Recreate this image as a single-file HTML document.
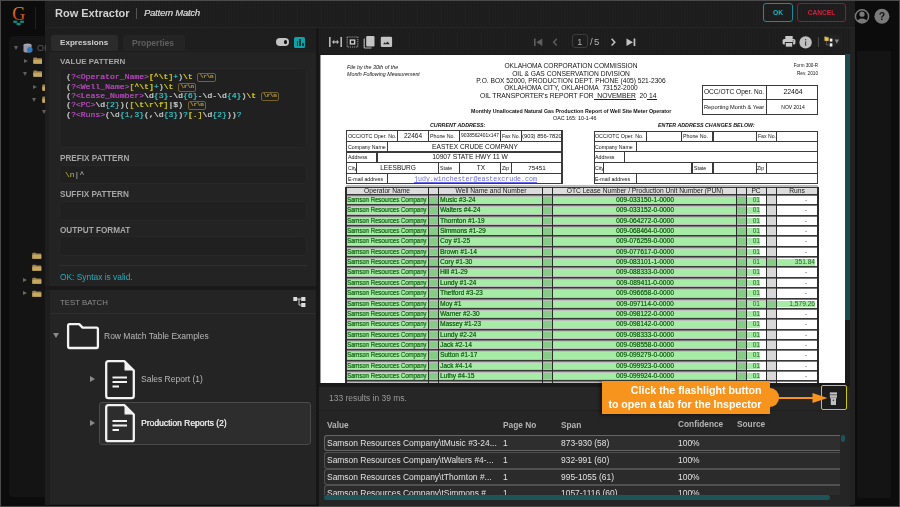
<!DOCTYPE html>
<html><head><meta charset="utf-8">
<style>
*{margin:0;padding:0;box-sizing:border-box}
html,body{width:900px;height:507px;overflow:hidden;background:#4a4a4a;font-family:"Liberation Sans",sans-serif}
.a{position:absolute}
#app{position:absolute;left:1px;top:1px;width:898px;height:505px;background:#0c0c0c;overflow:hidden}
.grid{background-color:#1d1d1d;background-image:repeating-linear-gradient(90deg,rgba(255,255,255,0.012) 0 1px,transparent 1px 3px),repeating-linear-gradient(0deg,rgba(0,0,0,0.05) 0 1px,transparent 1px 3px)}
.mono{font-family:"Liberation Mono",monospace}
.t{white-space:pre;position:absolute;will-change:transform}
.rn{display:inline-block;font-size:5.6px;line-height:6.5px;padding:0 1.4px;border:1px solid #6e5a22;border-radius:2px;color:#8a7430;vertical-align:1px;font-weight:bold;color:#9a8438;border-color:#76622a}
</style></head>
<body>
<div id="app">
</div>
<!-- absolute page coords layer -->
<div class="a" style="left:0;top:0;width:900px;height:507px">
  <!-- left sidebar inner panel -->
  <div class="a" style="left:9px;top:36px;width:36px;height:461px;background:#141414;border-radius:4px 0 0 4px"></div>
  <!-- header -->
  <div class="a grid" style="left:45px;top:1px;width:810px;height:26px"></div>
  <div class="a" style="left:45px;top:27px;width:810px;height:1px;background:#262626"></div>
  <!-- left col bg -->
  <div class="a" style="left:45px;top:28px;width:271px;height:477px;background:#1e1e1e"></div>
  <!-- expressions panel -->
  <div class="a" style="left:49px;top:50px;width:267px;height:236px;background:#232323"></div><div class="a" style="left:49px;top:50.5px;width:267px;height:1px;background:#1c1c1c"></div>
  <div class="a" style="left:45px;top:286px;width:271px;height:4px;background:#191919"></div>
  <!-- test batch panel -->
  <div class="a" style="left:50px;top:290px;width:266px;height:214px;background:#242424"></div>
  <!-- divider -->
  <div class="a" style="left:316px;top:28px;width:3px;height:477px;background:#161616"></div>
  <!-- doc toolbar -->
  <div class="a grid" style="left:319px;top:28px;width:532px;height:26px"></div>
  <!-- doc viewer area -->
  <div class="a" style="left:319px;top:54px;width:532px;height:333px;background:#1a1a1a"></div>
  <div class="a" style="left:320px;top:54.7px;width:525px;height:328px;background:#fff;overflow:hidden"><div class="a" style="left:-320px;top:-54.7px;width:900px;height:507px"><!--DOC-->
<div class="t" style="left:347.00px;top:60.80px;line-height:12px;font-size:5.32px;color:#111;font-style:italic">File by the 30th of the</div>
<div class="t" style="left:347.00px;top:67.90px;line-height:12px;font-size:5.34px;color:#111;font-style:italic">Month Following Measurement</div>
<div class="t" style="left:470.85px;width:200px;text-align:center;top:60.20px;line-height:12px;font-size:6.63px;color:#111;">OKLAHOMA CORPORATION COMMISSION</div>
<div class="t" style="left:470.85px;width:200px;text-align:center;top:67.60px;line-height:12px;font-size:6.67px;color:#111;">OIL &amp; GAS CONSERVATION DIVISION</div>
<div class="t" style="left:470.85px;width:200px;text-align:center;top:74.90px;line-height:12px;font-size:6.62px;color:#111;">P.O. BOX 52000, PRODUCTION DEPT. PHONE (405) 521-2306</div>
<div class="t" style="left:470.85px;width:200px;text-align:center;top:82.20px;line-height:12px;font-size:6.64px;color:#111;">OKLAHOMA CITY, OKLAHOMA&nbsp; 73152-2000</div>
<div class="t" style="left:480.30px;top:89.60px;line-height:12px;font-size:6.74px;color:#111;">OIL TRANSPORTER's REPORT FOR&nbsp; NOVEMBER&nbsp; 20 14</div>
<div class="a" style="left:593.50px;top:98.90px;width:42.80px;height:0.80px;background:#222;"></div>
<div class="a" style="left:647.30px;top:98.90px;width:9.70px;height:0.80px;background:#222;"></div>
<div class="t" style="left:471.20px;top:104.70px;line-height:12px;font-size:5.3px;color:#111;font-weight:bold">Monthly Unallocated Natural Gas Production Report of Well Site Meter Operator</div>
<div class="t" style="left:553.00px;top:112.00px;line-height:12px;font-size:5.37px;color:#111;">OAC 165: 10-1-46</div>
<div class="t" style="left:617.50px;width:200px;text-align:right;top:60.40px;line-height:12px;font-size:4.54px;color:#111;">Form 300-R</div>
<div class="t" style="left:617.50px;width:200px;text-align:right;top:67.80px;line-height:12px;font-size:4.7px;color:#111;">Rev. 2010</div>
<div class="a" style="left:702.00px;top:84.70px;width:116.30px;height:1.10px;background:#3a3a3a;"></div>
<div class="a" style="left:702.00px;top:113.50px;width:116.30px;height:1.10px;background:#3a3a3a;"></div>
<div class="a" style="left:702.00px;top:84.70px;width:1.10px;height:29.90px;background:#3a3a3a;"></div>
<div class="a" style="left:817.20px;top:84.70px;width:1.10px;height:29.90px;background:#3a3a3a;"></div>
<div class="a" style="left:702.00px;top:99.05px;width:116.30px;height:1.10px;background:#3a3a3a;"></div>
<div class="a" style="left:766.05px;top:84.70px;width:1.10px;height:29.90px;background:#3a3a3a;"></div>
<div class="t" style="left:703.80px;top:86.10px;line-height:12px;font-size:6.57px;color:#111;">OCC/OTC Oper. No.</div>
<div class="t" style="left:692.50px;width:200px;text-align:center;top:86.10px;line-height:12px;font-size:6.9px;color:#111;">22464</div>
<div class="t" style="left:703.80px;top:100.70px;line-height:12px;font-size:5.67px;color:#111;">Reporting Month &amp; Year</div>
<div class="t" style="left:692.50px;width:200px;text-align:center;top:100.70px;line-height:12px;font-size:5.0px;color:#111;">NOV 2014</div>
<div class="t" style="left:429.50px;top:118.70px;line-height:12px;font-size:5.35px;color:#111;font-weight:bold;font-style:italic">CURRENT ADDRESS:</div>
<div class="t" style="left:658.30px;top:118.80px;line-height:12px;font-size:5.35px;color:#111;font-weight:bold;font-style:italic">ENTER ADDRESS CHANGES BELOW:</div>
<div class="a" style="left:346.20px;top:130.20px;width:216.40px;height:1.20px;background:#3a3a3a;"></div>
<div class="a" style="left:346.20px;top:183.00px;width:216.40px;height:1.20px;background:#3a3a3a;"></div>
<div class="a" style="left:346.20px;top:130.20px;width:1.20px;height:54.00px;background:#3a3a3a;"></div>
<div class="a" style="left:561.40px;top:130.20px;width:1.20px;height:54.00px;background:#3a3a3a;"></div>
<div class="a" style="left:346.20px;top:140.70px;width:216.40px;height:1.20px;background:#3a3a3a;"></div>
<div class="a" style="left:346.20px;top:151.40px;width:216.40px;height:1.20px;background:#3a3a3a;"></div>
<div class="a" style="left:346.20px;top:162.00px;width:216.40px;height:1.20px;background:#3a3a3a;"></div>
<div class="a" style="left:346.20px;top:172.80px;width:216.40px;height:1.20px;background:#3a3a3a;"></div>
<div class="a" style="left:396.80px;top:130.20px;width:1.20px;height:11.10px;background:#3a3a3a;"></div>
<div class="a" style="left:427.90px;top:130.20px;width:1.20px;height:11.10px;background:#3a3a3a;"></div>
<div class="a" style="left:458.90px;top:130.20px;width:1.20px;height:11.10px;background:#3a3a3a;"></div>
<div class="a" style="left:500.10px;top:130.20px;width:1.20px;height:11.10px;background:#3a3a3a;"></div>
<div class="a" style="left:520.80px;top:130.20px;width:1.20px;height:11.10px;background:#3a3a3a;"></div>
<div class="a" style="left:386.70px;top:141.30px;width:1.20px;height:10.70px;background:#3a3a3a;"></div>
<div class="a" style="left:376.40px;top:152.00px;width:1.20px;height:10.60px;background:#3a3a3a;"></div>
<div class="a" style="left:356.00px;top:162.60px;width:1.20px;height:10.80px;background:#3a3a3a;"></div>
<div class="a" style="left:437.80px;top:162.60px;width:1.20px;height:10.80px;background:#3a3a3a;"></div>
<div class="a" style="left:458.90px;top:162.60px;width:1.20px;height:10.80px;background:#3a3a3a;"></div>
<div class="a" style="left:500.10px;top:162.60px;width:1.20px;height:10.80px;background:#3a3a3a;"></div>
<div class="a" style="left:510.70px;top:162.60px;width:1.20px;height:10.80px;background:#3a3a3a;"></div>
<div class="a" style="left:386.70px;top:173.40px;width:1.20px;height:10.80px;background:#3a3a3a;"></div>
<div class="t" style="left:347.60px;top:129.75px;line-height:12px;font-size:5.29px;color:#111;">OCC/OTC Oper. No.</div>
<div class="t" style="left:313.00px;width:200px;text-align:center;top:129.75px;line-height:12px;font-size:6.54px;color:#111;">22464</div>
<div class="t" style="left:429.80px;top:129.75px;line-height:12px;font-size:5.29px;color:#111;">Phone No.</div>
<div class="t" style="left:461.20px;top:129.75px;line-height:12px;font-size:4.92px;color:#111;">9038562401x147</div>
<div class="t" style="left:502.00px;top:129.75px;line-height:12px;font-size:5.11px;color:#111;">Fax No.</div>
<div class="t" style="left:522.20px;top:129.75px;line-height:12px;font-size:5.8px;color:#111;">(903) 856-7820</div>
<div class="t" style="left:347.60px;top:140.65px;line-height:12px;font-size:5.22px;color:#111;">Company Name</div>
<div class="t" style="left:375.40px;width:200px;text-align:center;top:140.65px;line-height:12px;font-size:6.58px;color:#111;">EASTEX CRUDE COMPANY</div>
<div class="t" style="left:347.60px;top:151.30px;line-height:12px;font-size:5.3px;color:#111;">Address</div>
<div class="t" style="left:370.40px;width:200px;text-align:center;top:151.30px;line-height:12px;font-size:6.72px;color:#111;">10907 STATE HWY 11 W</div>
<div class="t" style="left:347.60px;top:162.00px;line-height:12px;font-size:5.2px;color:#111;">City</div>
<div class="t" style="left:297.80px;width:200px;text-align:center;top:162.00px;line-height:12px;font-size:6.55px;color:#111;">LEESBURG</div>
<div class="t" style="left:440.20px;top:162.00px;line-height:12px;font-size:5.2px;color:#111;">State</div>
<div class="t" style="left:380.60px;width:200px;text-align:center;top:162.00px;line-height:12px;font-size:6.5px;color:#111;">TX</div>
<div class="t" style="left:501.60px;top:162.00px;line-height:12px;font-size:5.2px;color:#111;">Zip</div>
<div class="t" style="left:437.00px;width:200px;text-align:center;top:162.00px;line-height:12px;font-size:6.26px;color:#111;">75451</div>
<div class="t" style="left:347.60px;top:172.80px;line-height:12px;font-size:5.28px;color:#111;">E-mail address</div>
<div class="t mono" style="left:414px;top:172.80px;line-height:12px;font-size:6.61px;color:#6a6ae6;text-decoration:underline">judy.winchester@eastexcrude.com</div>
<div class="a" style="left:593.80px;top:130.60px;width:224.00px;height:1.20px;background:#3a3a3a;"></div>
<div class="a" style="left:593.80px;top:182.80px;width:224.00px;height:1.20px;background:#3a3a3a;"></div>
<div class="a" style="left:593.80px;top:130.60px;width:1.20px;height:53.40px;background:#3a3a3a;"></div>
<div class="a" style="left:816.60px;top:130.60px;width:1.20px;height:53.40px;background:#3a3a3a;"></div>
<div class="a" style="left:593.80px;top:140.60px;width:224.00px;height:1.20px;background:#3a3a3a;"></div>
<div class="a" style="left:593.80px;top:151.20px;width:224.00px;height:1.20px;background:#3a3a3a;"></div>
<div class="a" style="left:593.80px;top:162.20px;width:224.00px;height:1.20px;background:#3a3a3a;"></div>
<div class="a" style="left:593.80px;top:172.80px;width:224.00px;height:1.20px;background:#3a3a3a;"></div>
<div class="a" style="left:645.80px;top:130.60px;width:1.20px;height:10.60px;background:#3a3a3a;"></div>
<div class="a" style="left:681.20px;top:130.60px;width:1.20px;height:10.60px;background:#3a3a3a;"></div>
<div class="a" style="left:712.40px;top:130.60px;width:1.20px;height:10.60px;background:#3a3a3a;"></div>
<div class="a" style="left:756.00px;top:130.60px;width:1.20px;height:10.60px;background:#3a3a3a;"></div>
<div class="a" style="left:776.00px;top:130.60px;width:1.20px;height:10.60px;background:#3a3a3a;"></div>
<div class="a" style="left:636.10px;top:141.20px;width:1.20px;height:10.60px;background:#3a3a3a;"></div>
<div class="a" style="left:623.90px;top:151.80px;width:1.20px;height:11.00px;background:#3a3a3a;"></div>
<div class="a" style="left:602.90px;top:162.80px;width:1.20px;height:10.60px;background:#3a3a3a;"></div>
<div class="a" style="left:691.40px;top:162.80px;width:1.20px;height:10.60px;background:#3a3a3a;"></div>
<div class="a" style="left:712.40px;top:162.80px;width:1.20px;height:10.60px;background:#3a3a3a;"></div>
<div class="a" style="left:756.00px;top:162.80px;width:1.20px;height:10.60px;background:#3a3a3a;"></div>
<div class="a" style="left:765.60px;top:162.80px;width:1.20px;height:10.60px;background:#3a3a3a;"></div>
<div class="a" style="left:636.10px;top:173.40px;width:1.20px;height:10.60px;background:#3a3a3a;"></div>
<div class="t" style="left:595.00px;top:129.90px;line-height:12px;font-size:5.29px;color:#111;">OCC/OTC Oper. No.</div>
<div class="t" style="left:682.80px;top:129.90px;line-height:12px;font-size:5.29px;color:#111;">Phone No.</div>
<div class="t" style="left:757.50px;top:129.90px;line-height:12px;font-size:5.11px;color:#111;">Fax No.</div>
<div class="t" style="left:595.00px;top:140.50px;line-height:12px;font-size:5.22px;color:#111;">Company Name</div>
<div class="t" style="left:595.00px;top:151.30px;line-height:12px;font-size:5.3px;color:#111;">Address</div>
<div class="t" style="left:595.00px;top:162.10px;line-height:12px;font-size:5.2px;color:#111;">City</div>
<div class="t" style="left:693.50px;top:162.10px;line-height:12px;font-size:5.2px;color:#111;">State</div>
<div class="t" style="left:757.30px;top:162.10px;line-height:12px;font-size:5.2px;color:#111;">Zip</div>
<div class="t" style="left:595.00px;top:172.70px;line-height:12px;font-size:5.28px;color:#111;">E-mail address</div>
<div class="a" style="left:346.10px;top:184.80px;width:471.80px;height:198.20px;background:#bdbdbd;"></div>
<div class="a" style="left:346.10px;top:187.00px;width:471.80px;height:7.20px;background:#333;"></div>
<div class="a" style="left:347.30px;top:188.20px;width:469.40px;height:5.80px;background:#dcdcdc;"></div>
<div class="t" style="left:287.35px;width:200px;text-align:center;top:184.90px;line-height:12px;font-size:6.67px;color:#1a1a1a;">Operator Name</div>
<div class="t" style="left:390.50px;width:200px;text-align:center;top:184.90px;line-height:12px;font-size:6.67px;color:#1a1a1a;">Well Name and Number</div>
<div class="t" style="left:544.65px;width:200px;text-align:center;top:184.90px;line-height:12px;font-size:6.67px;color:#1a1a1a;">OTC Lease Number / Production Unit Number (PUN)</div>
<div class="t" style="left:656.30px;width:200px;text-align:center;top:184.90px;line-height:12px;font-size:6.67px;color:#1a1a1a;">PC</div>
<div class="t" style="left:697.20px;width:200px;text-align:center;top:184.90px;line-height:12px;font-size:6.67px;color:#1a1a1a;">Runs</div>
<div class="a" style="left:346.10px;top:194.00px;width:471.80px;height:1.00px;background:#383838;"></div>
<div class="a" style="left:346.10px;top:195.00px;width:471.80px;height:1.00px;background:#7a7a7a;"></div>
<div class="a" style="left:346.10px;top:197.00px;width:82.50px;height:7.00px;background:#a6eba6;"></div>
<div class="a" style="left:428.60px;top:197.00px;width:10.00px;height:7.00px;background:#86cc86;"></div>
<div class="a" style="left:438.60px;top:197.00px;width:103.80px;height:7.00px;background:#a6eba6;"></div>
<div class="a" style="left:542.40px;top:197.00px;width:10.20px;height:7.00px;background:#86cc86;"></div>
<div class="a" style="left:552.60px;top:197.00px;width:184.10px;height:7.00px;background:#a6eba6;"></div>
<div class="a" style="left:736.70px;top:197.00px;width:9.70px;height:7.00px;background:#86cc86;"></div>
<div class="a" style="left:746.40px;top:196.30px;width:19.80px;height:8.40px;background:#fff;"></div>
<div class="a" style="left:746.40px;top:197.00px;width:13.90px;height:7.00px;background:#a6eba6;"></div>
<div class="a" style="left:766.20px;top:196.30px;width:10.30px;height:8.40px;background:#d8d8d8;"></div>
<div class="a" style="left:776.50px;top:196.30px;width:41.40px;height:8.40px;background:#fff;"></div>
<div class="t" style="left:347.20px;top:194.10px;line-height:12px;font-size:6.5px;color:#1c6a1c;transform:scaleX(0.92);transform-origin:0 0;text-shadow:0.15px 0 0 #1c6a1c">Samson Resources Company</div>
<div class="t" style="left:440.40px;top:194.10px;line-height:12px;font-size:6.52px;color:#1c6a1c;text-shadow:0.15px 0 0 #1c6a1c">Music #3-24</div>
<div class="t" style="left:544.65px;width:200px;text-align:center;top:194.10px;line-height:12px;font-size:6.6px;color:#1c6a1c;text-shadow:0.15px 0 0 #1c6a1c">009-033150-1-0000</div>
<div class="t" style="left:560.30px;width:200px;text-align:right;top:194.10px;line-height:12px;font-size:6.6px;color:#1c6a1c;">01</div>
<div class="t" style="left:706.30px;width:200px;text-align:center;top:194.10px;line-height:12px;font-size:6.0px;color:#333;">-</div>
<div class="a" style="left:346.10px;top:204.00px;width:471.80px;height:1.00px;background:#383838;"></div>
<div class="a" style="left:346.10px;top:205.00px;width:471.80px;height:1.00px;background:#7a7a7a;"></div>
<div class="a" style="left:346.10px;top:207.00px;width:82.50px;height:7.00px;background:#a6eba6;"></div>
<div class="a" style="left:428.60px;top:207.00px;width:10.00px;height:7.00px;background:#86cc86;"></div>
<div class="a" style="left:438.60px;top:207.00px;width:103.80px;height:7.00px;background:#a6eba6;"></div>
<div class="a" style="left:542.40px;top:207.00px;width:10.20px;height:7.00px;background:#86cc86;"></div>
<div class="a" style="left:552.60px;top:207.00px;width:184.10px;height:7.00px;background:#a6eba6;"></div>
<div class="a" style="left:736.70px;top:207.00px;width:9.70px;height:7.00px;background:#86cc86;"></div>
<div class="a" style="left:746.40px;top:206.30px;width:19.80px;height:8.40px;background:#fff;"></div>
<div class="a" style="left:746.40px;top:207.00px;width:13.90px;height:7.00px;background:#a6eba6;"></div>
<div class="a" style="left:766.20px;top:206.30px;width:10.30px;height:8.40px;background:#d8d8d8;"></div>
<div class="a" style="left:776.50px;top:206.30px;width:41.40px;height:8.40px;background:#fff;"></div>
<div class="t" style="left:347.20px;top:204.44px;line-height:12px;font-size:6.5px;color:#1c6a1c;transform:scaleX(0.92);transform-origin:0 0;text-shadow:0.15px 0 0 #1c6a1c">Samson Resources Company</div>
<div class="t" style="left:440.40px;top:204.44px;line-height:12px;font-size:6.52px;color:#1c6a1c;text-shadow:0.15px 0 0 #1c6a1c">Walters #4-24</div>
<div class="t" style="left:544.65px;width:200px;text-align:center;top:204.44px;line-height:12px;font-size:6.6px;color:#1c6a1c;text-shadow:0.15px 0 0 #1c6a1c">009-033152-0-0000</div>
<div class="t" style="left:560.30px;width:200px;text-align:right;top:204.44px;line-height:12px;font-size:6.6px;color:#1c6a1c;">01</div>
<div class="t" style="left:706.30px;width:200px;text-align:center;top:204.44px;line-height:12px;font-size:6.0px;color:#333;">-</div>
<div class="a" style="left:346.10px;top:215.00px;width:471.80px;height:1.00px;background:#383838;"></div>
<div class="a" style="left:346.10px;top:216.00px;width:471.80px;height:1.00px;background:#7a7a7a;"></div>
<div class="a" style="left:346.10px;top:218.00px;width:82.50px;height:6.00px;background:#a6eba6;"></div>
<div class="a" style="left:428.60px;top:218.00px;width:10.00px;height:6.00px;background:#86cc86;"></div>
<div class="a" style="left:438.60px;top:218.00px;width:103.80px;height:6.00px;background:#a6eba6;"></div>
<div class="a" style="left:542.40px;top:218.00px;width:10.20px;height:6.00px;background:#86cc86;"></div>
<div class="a" style="left:552.60px;top:218.00px;width:184.10px;height:6.00px;background:#a6eba6;"></div>
<div class="a" style="left:736.70px;top:218.00px;width:9.70px;height:6.00px;background:#86cc86;"></div>
<div class="a" style="left:746.40px;top:217.30px;width:19.80px;height:7.40px;background:#fff;"></div>
<div class="a" style="left:746.40px;top:218.00px;width:13.90px;height:6.00px;background:#a6eba6;"></div>
<div class="a" style="left:766.20px;top:217.30px;width:10.30px;height:7.40px;background:#d8d8d8;"></div>
<div class="a" style="left:776.50px;top:217.30px;width:41.40px;height:7.40px;background:#fff;"></div>
<div class="t" style="left:347.20px;top:214.78px;line-height:12px;font-size:6.5px;color:#1c6a1c;transform:scaleX(0.92);transform-origin:0 0;text-shadow:0.15px 0 0 #1c6a1c">Samson Resources Company</div>
<div class="t" style="left:440.40px;top:214.78px;line-height:12px;font-size:6.52px;color:#1c6a1c;text-shadow:0.15px 0 0 #1c6a1c">Thornton #1-19</div>
<div class="t" style="left:544.65px;width:200px;text-align:center;top:214.78px;line-height:12px;font-size:6.6px;color:#1c6a1c;text-shadow:0.15px 0 0 #1c6a1c">009-064272-0-0000</div>
<div class="t" style="left:560.30px;width:200px;text-align:right;top:214.78px;line-height:12px;font-size:6.6px;color:#1c6a1c;">01</div>
<div class="t" style="left:706.30px;width:200px;text-align:center;top:214.78px;line-height:12px;font-size:6.0px;color:#333;">-</div>
<div class="a" style="left:346.10px;top:225.00px;width:471.80px;height:1.00px;background:#383838;"></div>
<div class="a" style="left:346.10px;top:226.00px;width:471.80px;height:1.00px;background:#7a7a7a;"></div>
<div class="a" style="left:346.10px;top:228.00px;width:82.50px;height:7.00px;background:#a6eba6;"></div>
<div class="a" style="left:428.60px;top:228.00px;width:10.00px;height:7.00px;background:#86cc86;"></div>
<div class="a" style="left:438.60px;top:228.00px;width:103.80px;height:7.00px;background:#a6eba6;"></div>
<div class="a" style="left:542.40px;top:228.00px;width:10.20px;height:7.00px;background:#86cc86;"></div>
<div class="a" style="left:552.60px;top:228.00px;width:184.10px;height:7.00px;background:#a6eba6;"></div>
<div class="a" style="left:736.70px;top:228.00px;width:9.70px;height:7.00px;background:#86cc86;"></div>
<div class="a" style="left:746.40px;top:227.30px;width:19.80px;height:8.40px;background:#fff;"></div>
<div class="a" style="left:746.40px;top:228.00px;width:13.90px;height:7.00px;background:#a6eba6;"></div>
<div class="a" style="left:766.20px;top:227.30px;width:10.30px;height:8.40px;background:#d8d8d8;"></div>
<div class="a" style="left:776.50px;top:227.30px;width:41.40px;height:8.40px;background:#fff;"></div>
<div class="t" style="left:347.20px;top:225.12px;line-height:12px;font-size:6.5px;color:#1c6a1c;transform:scaleX(0.92);transform-origin:0 0;text-shadow:0.15px 0 0 #1c6a1c">Samson Resources Company</div>
<div class="t" style="left:440.40px;top:225.12px;line-height:12px;font-size:6.52px;color:#1c6a1c;text-shadow:0.15px 0 0 #1c6a1c">Simmons #1-29</div>
<div class="t" style="left:544.65px;width:200px;text-align:center;top:225.12px;line-height:12px;font-size:6.6px;color:#1c6a1c;text-shadow:0.15px 0 0 #1c6a1c">009-068464-0-0000</div>
<div class="t" style="left:560.30px;width:200px;text-align:right;top:225.12px;line-height:12px;font-size:6.6px;color:#1c6a1c;">01</div>
<div class="t" style="left:706.30px;width:200px;text-align:center;top:225.12px;line-height:12px;font-size:6.0px;color:#333;">-</div>
<div class="a" style="left:346.10px;top:235.00px;width:471.80px;height:1.00px;background:#383838;"></div>
<div class="a" style="left:346.10px;top:236.00px;width:471.80px;height:1.00px;background:#7a7a7a;"></div>
<div class="a" style="left:346.10px;top:238.00px;width:82.50px;height:7.00px;background:#a6eba6;"></div>
<div class="a" style="left:428.60px;top:238.00px;width:10.00px;height:7.00px;background:#86cc86;"></div>
<div class="a" style="left:438.60px;top:238.00px;width:103.80px;height:7.00px;background:#a6eba6;"></div>
<div class="a" style="left:542.40px;top:238.00px;width:10.20px;height:7.00px;background:#86cc86;"></div>
<div class="a" style="left:552.60px;top:238.00px;width:184.10px;height:7.00px;background:#a6eba6;"></div>
<div class="a" style="left:736.70px;top:238.00px;width:9.70px;height:7.00px;background:#86cc86;"></div>
<div class="a" style="left:746.40px;top:237.30px;width:19.80px;height:8.40px;background:#fff;"></div>
<div class="a" style="left:746.40px;top:238.00px;width:13.90px;height:7.00px;background:#a6eba6;"></div>
<div class="a" style="left:766.20px;top:237.30px;width:10.30px;height:8.40px;background:#d8d8d8;"></div>
<div class="a" style="left:776.50px;top:237.30px;width:41.40px;height:8.40px;background:#fff;"></div>
<div class="t" style="left:347.20px;top:235.46px;line-height:12px;font-size:6.5px;color:#1c6a1c;transform:scaleX(0.92);transform-origin:0 0;text-shadow:0.15px 0 0 #1c6a1c">Samson Resources Company</div>
<div class="t" style="left:440.40px;top:235.46px;line-height:12px;font-size:6.52px;color:#1c6a1c;text-shadow:0.15px 0 0 #1c6a1c">Coy #1-25</div>
<div class="t" style="left:544.65px;width:200px;text-align:center;top:235.46px;line-height:12px;font-size:6.6px;color:#1c6a1c;text-shadow:0.15px 0 0 #1c6a1c">009-076259-0-0000</div>
<div class="t" style="left:560.30px;width:200px;text-align:right;top:235.46px;line-height:12px;font-size:6.6px;color:#1c6a1c;">01</div>
<div class="t" style="left:706.30px;width:200px;text-align:center;top:235.46px;line-height:12px;font-size:6.0px;color:#333;">-</div>
<div class="a" style="left:346.10px;top:246.00px;width:471.80px;height:1.00px;background:#383838;"></div>
<div class="a" style="left:346.10px;top:247.00px;width:471.80px;height:1.00px;background:#7a7a7a;"></div>
<div class="a" style="left:346.10px;top:249.00px;width:82.50px;height:6.00px;background:#a6eba6;"></div>
<div class="a" style="left:428.60px;top:249.00px;width:10.00px;height:6.00px;background:#86cc86;"></div>
<div class="a" style="left:438.60px;top:249.00px;width:103.80px;height:6.00px;background:#a6eba6;"></div>
<div class="a" style="left:542.40px;top:249.00px;width:10.20px;height:6.00px;background:#86cc86;"></div>
<div class="a" style="left:552.60px;top:249.00px;width:184.10px;height:6.00px;background:#a6eba6;"></div>
<div class="a" style="left:736.70px;top:249.00px;width:9.70px;height:6.00px;background:#86cc86;"></div>
<div class="a" style="left:746.40px;top:248.30px;width:19.80px;height:7.40px;background:#fff;"></div>
<div class="a" style="left:746.40px;top:249.00px;width:13.90px;height:6.00px;background:#a6eba6;"></div>
<div class="a" style="left:766.20px;top:248.30px;width:10.30px;height:7.40px;background:#d8d8d8;"></div>
<div class="a" style="left:776.50px;top:248.30px;width:41.40px;height:7.40px;background:#fff;"></div>
<div class="t" style="left:347.20px;top:245.80px;line-height:12px;font-size:6.5px;color:#1c6a1c;transform:scaleX(0.92);transform-origin:0 0;text-shadow:0.15px 0 0 #1c6a1c">Samson Resources Company</div>
<div class="t" style="left:440.40px;top:245.80px;line-height:12px;font-size:6.52px;color:#1c6a1c;text-shadow:0.15px 0 0 #1c6a1c">Brown #1-14</div>
<div class="t" style="left:544.65px;width:200px;text-align:center;top:245.80px;line-height:12px;font-size:6.6px;color:#1c6a1c;text-shadow:0.15px 0 0 #1c6a1c">009-077617-0-0000</div>
<div class="t" style="left:560.30px;width:200px;text-align:right;top:245.80px;line-height:12px;font-size:6.6px;color:#1c6a1c;">01</div>
<div class="t" style="left:706.30px;width:200px;text-align:center;top:245.80px;line-height:12px;font-size:6.0px;color:#333;">-</div>
<div class="a" style="left:346.10px;top:256.00px;width:471.80px;height:1.00px;background:#383838;"></div>
<div class="a" style="left:346.10px;top:257.00px;width:471.80px;height:1.00px;background:#7a7a7a;"></div>
<div class="a" style="left:346.10px;top:259.00px;width:82.50px;height:7.00px;background:#a6eba6;"></div>
<div class="a" style="left:428.60px;top:259.00px;width:10.00px;height:7.00px;background:#86cc86;"></div>
<div class="a" style="left:438.60px;top:259.00px;width:103.80px;height:7.00px;background:#a6eba6;"></div>
<div class="a" style="left:542.40px;top:259.00px;width:10.20px;height:7.00px;background:#86cc86;"></div>
<div class="a" style="left:552.60px;top:259.00px;width:184.10px;height:7.00px;background:#a6eba6;"></div>
<div class="a" style="left:736.70px;top:259.00px;width:9.70px;height:7.00px;background:#86cc86;"></div>
<div class="a" style="left:746.40px;top:259.00px;width:19.80px;height:7.00px;background:#a6eba6;"></div>
<div class="a" style="left:766.20px;top:259.00px;width:10.30px;height:7.00px;background:#86cc86;"></div>
<div class="a" style="left:776.50px;top:258.30px;width:41.40px;height:8.40px;background:#fff;"></div>
<div class="a" style="left:776.50px;top:259.00px;width:38.50px;height:7.00px;background:#a6eba6;"></div>
<div class="t" style="left:347.20px;top:256.14px;line-height:12px;font-size:6.5px;color:#1c6a1c;transform:scaleX(0.92);transform-origin:0 0;text-shadow:0.15px 0 0 #1c6a1c">Samson Resources Company</div>
<div class="t" style="left:440.40px;top:256.14px;line-height:12px;font-size:6.52px;color:#1c6a1c;text-shadow:0.15px 0 0 #1c6a1c">Cory #1-30</div>
<div class="t" style="left:544.65px;width:200px;text-align:center;top:256.14px;line-height:12px;font-size:6.6px;color:#1c6a1c;text-shadow:0.15px 0 0 #1c6a1c">009-083101-1-0000</div>
<div class="t" style="left:560.30px;width:200px;text-align:right;top:256.14px;line-height:12px;font-size:6.6px;color:#1c6a1c;">01</div>
<div class="t" style="left:614.80px;width:200px;text-align:right;top:256.14px;line-height:12px;font-size:6.6px;color:#1c6a1c;">351.84</div>
<div class="a" style="left:346.10px;top:266.00px;width:471.80px;height:1.00px;background:#383838;"></div>
<div class="a" style="left:346.10px;top:267.00px;width:471.80px;height:1.00px;background:#7a7a7a;"></div>
<div class="a" style="left:346.10px;top:269.00px;width:82.50px;height:7.00px;background:#a6eba6;"></div>
<div class="a" style="left:428.60px;top:269.00px;width:10.00px;height:7.00px;background:#86cc86;"></div>
<div class="a" style="left:438.60px;top:269.00px;width:103.80px;height:7.00px;background:#a6eba6;"></div>
<div class="a" style="left:542.40px;top:269.00px;width:10.20px;height:7.00px;background:#86cc86;"></div>
<div class="a" style="left:552.60px;top:269.00px;width:184.10px;height:7.00px;background:#a6eba6;"></div>
<div class="a" style="left:736.70px;top:269.00px;width:9.70px;height:7.00px;background:#86cc86;"></div>
<div class="a" style="left:746.40px;top:268.30px;width:19.80px;height:8.40px;background:#fff;"></div>
<div class="a" style="left:746.40px;top:269.00px;width:13.90px;height:7.00px;background:#a6eba6;"></div>
<div class="a" style="left:766.20px;top:268.30px;width:10.30px;height:8.40px;background:#d8d8d8;"></div>
<div class="a" style="left:776.50px;top:268.30px;width:41.40px;height:8.40px;background:#fff;"></div>
<div class="t" style="left:347.20px;top:266.48px;line-height:12px;font-size:6.5px;color:#1c6a1c;transform:scaleX(0.92);transform-origin:0 0;text-shadow:0.15px 0 0 #1c6a1c">Samson Resources Company</div>
<div class="t" style="left:440.40px;top:266.48px;line-height:12px;font-size:6.52px;color:#1c6a1c;text-shadow:0.15px 0 0 #1c6a1c">Hill #1-29</div>
<div class="t" style="left:544.65px;width:200px;text-align:center;top:266.48px;line-height:12px;font-size:6.6px;color:#1c6a1c;text-shadow:0.15px 0 0 #1c6a1c">009-088333-0-0000</div>
<div class="t" style="left:560.30px;width:200px;text-align:right;top:266.48px;line-height:12px;font-size:6.6px;color:#1c6a1c;">01</div>
<div class="t" style="left:706.30px;width:200px;text-align:center;top:266.48px;line-height:12px;font-size:6.0px;color:#333;">-</div>
<div class="a" style="left:346.10px;top:277.00px;width:471.80px;height:1.00px;background:#383838;"></div>
<div class="a" style="left:346.10px;top:278.00px;width:471.80px;height:1.00px;background:#7a7a7a;"></div>
<div class="a" style="left:346.10px;top:280.00px;width:82.50px;height:6.00px;background:#a6eba6;"></div>
<div class="a" style="left:428.60px;top:280.00px;width:10.00px;height:6.00px;background:#86cc86;"></div>
<div class="a" style="left:438.60px;top:280.00px;width:103.80px;height:6.00px;background:#a6eba6;"></div>
<div class="a" style="left:542.40px;top:280.00px;width:10.20px;height:6.00px;background:#86cc86;"></div>
<div class="a" style="left:552.60px;top:280.00px;width:184.10px;height:6.00px;background:#a6eba6;"></div>
<div class="a" style="left:736.70px;top:280.00px;width:9.70px;height:6.00px;background:#86cc86;"></div>
<div class="a" style="left:746.40px;top:279.30px;width:19.80px;height:7.40px;background:#fff;"></div>
<div class="a" style="left:746.40px;top:280.00px;width:13.90px;height:6.00px;background:#a6eba6;"></div>
<div class="a" style="left:766.20px;top:279.30px;width:10.30px;height:7.40px;background:#d8d8d8;"></div>
<div class="a" style="left:776.50px;top:279.30px;width:41.40px;height:7.40px;background:#fff;"></div>
<div class="t" style="left:347.20px;top:276.82px;line-height:12px;font-size:6.5px;color:#1c6a1c;transform:scaleX(0.92);transform-origin:0 0;text-shadow:0.15px 0 0 #1c6a1c">Samson Resources Company</div>
<div class="t" style="left:440.40px;top:276.82px;line-height:12px;font-size:6.52px;color:#1c6a1c;text-shadow:0.15px 0 0 #1c6a1c">Lundy #1-24</div>
<div class="t" style="left:544.65px;width:200px;text-align:center;top:276.82px;line-height:12px;font-size:6.6px;color:#1c6a1c;text-shadow:0.15px 0 0 #1c6a1c">009-089411-0-0000</div>
<div class="t" style="left:560.30px;width:200px;text-align:right;top:276.82px;line-height:12px;font-size:6.6px;color:#1c6a1c;">01</div>
<div class="t" style="left:706.30px;width:200px;text-align:center;top:276.82px;line-height:12px;font-size:6.0px;color:#333;">-</div>
<div class="a" style="left:346.10px;top:287.00px;width:471.80px;height:1.00px;background:#383838;"></div>
<div class="a" style="left:346.10px;top:288.00px;width:471.80px;height:1.00px;background:#7a7a7a;"></div>
<div class="a" style="left:346.10px;top:290.00px;width:82.50px;height:7.00px;background:#a6eba6;"></div>
<div class="a" style="left:428.60px;top:290.00px;width:10.00px;height:7.00px;background:#86cc86;"></div>
<div class="a" style="left:438.60px;top:290.00px;width:103.80px;height:7.00px;background:#a6eba6;"></div>
<div class="a" style="left:542.40px;top:290.00px;width:10.20px;height:7.00px;background:#86cc86;"></div>
<div class="a" style="left:552.60px;top:290.00px;width:184.10px;height:7.00px;background:#a6eba6;"></div>
<div class="a" style="left:736.70px;top:290.00px;width:9.70px;height:7.00px;background:#86cc86;"></div>
<div class="a" style="left:746.40px;top:289.30px;width:19.80px;height:8.40px;background:#fff;"></div>
<div class="a" style="left:746.40px;top:290.00px;width:13.90px;height:7.00px;background:#a6eba6;"></div>
<div class="a" style="left:766.20px;top:289.30px;width:10.30px;height:8.40px;background:#d8d8d8;"></div>
<div class="a" style="left:776.50px;top:289.30px;width:41.40px;height:8.40px;background:#fff;"></div>
<div class="t" style="left:347.20px;top:287.16px;line-height:12px;font-size:6.5px;color:#1c6a1c;transform:scaleX(0.92);transform-origin:0 0;text-shadow:0.15px 0 0 #1c6a1c">Samson Resources Company</div>
<div class="t" style="left:440.40px;top:287.16px;line-height:12px;font-size:6.52px;color:#1c6a1c;text-shadow:0.15px 0 0 #1c6a1c">Thetford #3-23</div>
<div class="t" style="left:544.65px;width:200px;text-align:center;top:287.16px;line-height:12px;font-size:6.6px;color:#1c6a1c;text-shadow:0.15px 0 0 #1c6a1c">009-096658-0-0000</div>
<div class="t" style="left:560.30px;width:200px;text-align:right;top:287.16px;line-height:12px;font-size:6.6px;color:#1c6a1c;">01</div>
<div class="t" style="left:706.30px;width:200px;text-align:center;top:287.16px;line-height:12px;font-size:6.0px;color:#333;">-</div>
<div class="a" style="left:346.10px;top:298.00px;width:471.80px;height:1.00px;background:#383838;"></div>
<div class="a" style="left:346.10px;top:299.00px;width:471.80px;height:1.00px;background:#7a7a7a;"></div>
<div class="a" style="left:346.10px;top:301.00px;width:82.50px;height:6.00px;background:#a6eba6;"></div>
<div class="a" style="left:428.60px;top:301.00px;width:10.00px;height:6.00px;background:#86cc86;"></div>
<div class="a" style="left:438.60px;top:301.00px;width:103.80px;height:6.00px;background:#a6eba6;"></div>
<div class="a" style="left:542.40px;top:301.00px;width:10.20px;height:6.00px;background:#86cc86;"></div>
<div class="a" style="left:552.60px;top:301.00px;width:184.10px;height:6.00px;background:#a6eba6;"></div>
<div class="a" style="left:736.70px;top:301.00px;width:9.70px;height:6.00px;background:#86cc86;"></div>
<div class="a" style="left:746.40px;top:301.00px;width:19.80px;height:6.00px;background:#a6eba6;"></div>
<div class="a" style="left:766.20px;top:301.00px;width:10.30px;height:6.00px;background:#86cc86;"></div>
<div class="a" style="left:776.50px;top:300.30px;width:41.40px;height:7.40px;background:#fff;"></div>
<div class="a" style="left:776.50px;top:301.00px;width:38.50px;height:6.00px;background:#a6eba6;"></div>
<div class="t" style="left:347.20px;top:297.50px;line-height:12px;font-size:6.5px;color:#1c6a1c;transform:scaleX(0.92);transform-origin:0 0;text-shadow:0.15px 0 0 #1c6a1c">Samson Resources Company</div>
<div class="t" style="left:440.40px;top:297.50px;line-height:12px;font-size:6.52px;color:#1c6a1c;text-shadow:0.15px 0 0 #1c6a1c">Moy #1</div>
<div class="t" style="left:544.65px;width:200px;text-align:center;top:297.50px;line-height:12px;font-size:6.6px;color:#1c6a1c;text-shadow:0.15px 0 0 #1c6a1c">009-097114-0-0000</div>
<div class="t" style="left:560.30px;width:200px;text-align:right;top:297.50px;line-height:12px;font-size:6.6px;color:#1c6a1c;">01</div>
<div class="t" style="left:614.80px;width:200px;text-align:right;top:297.50px;line-height:12px;font-size:6.6px;color:#1c6a1c;">1,579.26</div>
<div class="a" style="left:346.10px;top:308.00px;width:471.80px;height:1.00px;background:#383838;"></div>
<div class="a" style="left:346.10px;top:309.00px;width:471.80px;height:1.00px;background:#7a7a7a;"></div>
<div class="a" style="left:346.10px;top:311.00px;width:82.50px;height:6.00px;background:#a6eba6;"></div>
<div class="a" style="left:428.60px;top:311.00px;width:10.00px;height:6.00px;background:#86cc86;"></div>
<div class="a" style="left:438.60px;top:311.00px;width:103.80px;height:6.00px;background:#a6eba6;"></div>
<div class="a" style="left:542.40px;top:311.00px;width:10.20px;height:6.00px;background:#86cc86;"></div>
<div class="a" style="left:552.60px;top:311.00px;width:184.10px;height:6.00px;background:#a6eba6;"></div>
<div class="a" style="left:736.70px;top:311.00px;width:9.70px;height:6.00px;background:#86cc86;"></div>
<div class="a" style="left:746.40px;top:310.30px;width:19.80px;height:7.40px;background:#fff;"></div>
<div class="a" style="left:746.40px;top:311.00px;width:13.90px;height:6.00px;background:#a6eba6;"></div>
<div class="a" style="left:766.20px;top:310.30px;width:10.30px;height:7.40px;background:#d8d8d8;"></div>
<div class="a" style="left:776.50px;top:310.30px;width:41.40px;height:7.40px;background:#fff;"></div>
<div class="t" style="left:347.20px;top:307.84px;line-height:12px;font-size:6.5px;color:#1c6a1c;transform:scaleX(0.92);transform-origin:0 0;text-shadow:0.15px 0 0 #1c6a1c">Samson Resources Company</div>
<div class="t" style="left:440.40px;top:307.84px;line-height:12px;font-size:6.52px;color:#1c6a1c;text-shadow:0.15px 0 0 #1c6a1c">Warner #2-30</div>
<div class="t" style="left:544.65px;width:200px;text-align:center;top:307.84px;line-height:12px;font-size:6.6px;color:#1c6a1c;text-shadow:0.15px 0 0 #1c6a1c">009-098122-0-0000</div>
<div class="t" style="left:560.30px;width:200px;text-align:right;top:307.84px;line-height:12px;font-size:6.6px;color:#1c6a1c;">01</div>
<div class="t" style="left:706.30px;width:200px;text-align:center;top:307.84px;line-height:12px;font-size:6.0px;color:#333;">-</div>
<div class="a" style="left:346.10px;top:318.00px;width:471.80px;height:1.00px;background:#383838;"></div>
<div class="a" style="left:346.10px;top:319.00px;width:471.80px;height:1.00px;background:#7a7a7a;"></div>
<div class="a" style="left:346.10px;top:321.00px;width:82.50px;height:7.00px;background:#a6eba6;"></div>
<div class="a" style="left:428.60px;top:321.00px;width:10.00px;height:7.00px;background:#86cc86;"></div>
<div class="a" style="left:438.60px;top:321.00px;width:103.80px;height:7.00px;background:#a6eba6;"></div>
<div class="a" style="left:542.40px;top:321.00px;width:10.20px;height:7.00px;background:#86cc86;"></div>
<div class="a" style="left:552.60px;top:321.00px;width:184.10px;height:7.00px;background:#a6eba6;"></div>
<div class="a" style="left:736.70px;top:321.00px;width:9.70px;height:7.00px;background:#86cc86;"></div>
<div class="a" style="left:746.40px;top:320.30px;width:19.80px;height:8.40px;background:#fff;"></div>
<div class="a" style="left:746.40px;top:321.00px;width:13.90px;height:7.00px;background:#a6eba6;"></div>
<div class="a" style="left:766.20px;top:320.30px;width:10.30px;height:8.40px;background:#d8d8d8;"></div>
<div class="a" style="left:776.50px;top:320.30px;width:41.40px;height:8.40px;background:#fff;"></div>
<div class="t" style="left:347.20px;top:318.18px;line-height:12px;font-size:6.5px;color:#1c6a1c;transform:scaleX(0.92);transform-origin:0 0;text-shadow:0.15px 0 0 #1c6a1c">Samson Resources Company</div>
<div class="t" style="left:440.40px;top:318.18px;line-height:12px;font-size:6.52px;color:#1c6a1c;text-shadow:0.15px 0 0 #1c6a1c">Massey #1-23</div>
<div class="t" style="left:544.65px;width:200px;text-align:center;top:318.18px;line-height:12px;font-size:6.6px;color:#1c6a1c;text-shadow:0.15px 0 0 #1c6a1c">009-098142-0-0000</div>
<div class="t" style="left:560.30px;width:200px;text-align:right;top:318.18px;line-height:12px;font-size:6.6px;color:#1c6a1c;">01</div>
<div class="t" style="left:706.30px;width:200px;text-align:center;top:318.18px;line-height:12px;font-size:6.0px;color:#333;">-</div>
<div class="a" style="left:346.10px;top:329.00px;width:471.80px;height:1.00px;background:#383838;"></div>
<div class="a" style="left:346.10px;top:330.00px;width:471.80px;height:1.00px;background:#7a7a7a;"></div>
<div class="a" style="left:346.10px;top:332.00px;width:82.50px;height:6.00px;background:#a6eba6;"></div>
<div class="a" style="left:428.60px;top:332.00px;width:10.00px;height:6.00px;background:#86cc86;"></div>
<div class="a" style="left:438.60px;top:332.00px;width:103.80px;height:6.00px;background:#a6eba6;"></div>
<div class="a" style="left:542.40px;top:332.00px;width:10.20px;height:6.00px;background:#86cc86;"></div>
<div class="a" style="left:552.60px;top:332.00px;width:184.10px;height:6.00px;background:#a6eba6;"></div>
<div class="a" style="left:736.70px;top:332.00px;width:9.70px;height:6.00px;background:#86cc86;"></div>
<div class="a" style="left:746.40px;top:331.30px;width:19.80px;height:7.40px;background:#fff;"></div>
<div class="a" style="left:746.40px;top:332.00px;width:13.90px;height:6.00px;background:#a6eba6;"></div>
<div class="a" style="left:766.20px;top:331.30px;width:10.30px;height:7.40px;background:#d8d8d8;"></div>
<div class="a" style="left:776.50px;top:331.30px;width:41.40px;height:7.40px;background:#fff;"></div>
<div class="t" style="left:347.20px;top:328.52px;line-height:12px;font-size:6.5px;color:#1c6a1c;transform:scaleX(0.92);transform-origin:0 0;text-shadow:0.15px 0 0 #1c6a1c">Samson Resources Company</div>
<div class="t" style="left:440.40px;top:328.52px;line-height:12px;font-size:6.52px;color:#1c6a1c;text-shadow:0.15px 0 0 #1c6a1c">Lundy #2-24</div>
<div class="t" style="left:544.65px;width:200px;text-align:center;top:328.52px;line-height:12px;font-size:6.6px;color:#1c6a1c;text-shadow:0.15px 0 0 #1c6a1c">009-098333-0-0000</div>
<div class="t" style="left:560.30px;width:200px;text-align:right;top:328.52px;line-height:12px;font-size:6.6px;color:#1c6a1c;">01</div>
<div class="t" style="left:706.30px;width:200px;text-align:center;top:328.52px;line-height:12px;font-size:6.0px;color:#333;">-</div>
<div class="a" style="left:346.10px;top:339.00px;width:471.80px;height:1.00px;background:#383838;"></div>
<div class="a" style="left:346.10px;top:340.00px;width:471.80px;height:1.00px;background:#7a7a7a;"></div>
<div class="a" style="left:346.10px;top:342.00px;width:82.50px;height:6.00px;background:#a6eba6;"></div>
<div class="a" style="left:428.60px;top:342.00px;width:10.00px;height:6.00px;background:#86cc86;"></div>
<div class="a" style="left:438.60px;top:342.00px;width:103.80px;height:6.00px;background:#a6eba6;"></div>
<div class="a" style="left:542.40px;top:342.00px;width:10.20px;height:6.00px;background:#86cc86;"></div>
<div class="a" style="left:552.60px;top:342.00px;width:184.10px;height:6.00px;background:#a6eba6;"></div>
<div class="a" style="left:736.70px;top:342.00px;width:9.70px;height:6.00px;background:#86cc86;"></div>
<div class="a" style="left:746.40px;top:341.30px;width:19.80px;height:7.40px;background:#fff;"></div>
<div class="a" style="left:746.40px;top:342.00px;width:13.90px;height:6.00px;background:#a6eba6;"></div>
<div class="a" style="left:766.20px;top:341.30px;width:10.30px;height:7.40px;background:#d8d8d8;"></div>
<div class="a" style="left:776.50px;top:341.30px;width:41.40px;height:7.40px;background:#fff;"></div>
<div class="t" style="left:347.20px;top:338.86px;line-height:12px;font-size:6.5px;color:#1c6a1c;transform:scaleX(0.92);transform-origin:0 0;text-shadow:0.15px 0 0 #1c6a1c">Samson Resources Company</div>
<div class="t" style="left:440.40px;top:338.86px;line-height:12px;font-size:6.52px;color:#1c6a1c;text-shadow:0.15px 0 0 #1c6a1c">Jack #2-14</div>
<div class="t" style="left:544.65px;width:200px;text-align:center;top:338.86px;line-height:12px;font-size:6.6px;color:#1c6a1c;text-shadow:0.15px 0 0 #1c6a1c">009-098558-0-0000</div>
<div class="t" style="left:560.30px;width:200px;text-align:right;top:338.86px;line-height:12px;font-size:6.6px;color:#1c6a1c;">01</div>
<div class="t" style="left:706.30px;width:200px;text-align:center;top:338.86px;line-height:12px;font-size:6.0px;color:#333;">-</div>
<div class="a" style="left:346.10px;top:349.00px;width:471.80px;height:1.00px;background:#383838;"></div>
<div class="a" style="left:346.10px;top:350.00px;width:471.80px;height:1.00px;background:#7a7a7a;"></div>
<div class="a" style="left:346.10px;top:352.00px;width:82.50px;height:7.00px;background:#a6eba6;"></div>
<div class="a" style="left:428.60px;top:352.00px;width:10.00px;height:7.00px;background:#86cc86;"></div>
<div class="a" style="left:438.60px;top:352.00px;width:103.80px;height:7.00px;background:#a6eba6;"></div>
<div class="a" style="left:542.40px;top:352.00px;width:10.20px;height:7.00px;background:#86cc86;"></div>
<div class="a" style="left:552.60px;top:352.00px;width:184.10px;height:7.00px;background:#a6eba6;"></div>
<div class="a" style="left:736.70px;top:352.00px;width:9.70px;height:7.00px;background:#86cc86;"></div>
<div class="a" style="left:746.40px;top:351.30px;width:19.80px;height:8.40px;background:#fff;"></div>
<div class="a" style="left:746.40px;top:352.00px;width:13.90px;height:7.00px;background:#a6eba6;"></div>
<div class="a" style="left:766.20px;top:351.30px;width:10.30px;height:8.40px;background:#d8d8d8;"></div>
<div class="a" style="left:776.50px;top:351.30px;width:41.40px;height:8.40px;background:#fff;"></div>
<div class="t" style="left:347.20px;top:349.20px;line-height:12px;font-size:6.5px;color:#1c6a1c;transform:scaleX(0.92);transform-origin:0 0;text-shadow:0.15px 0 0 #1c6a1c">Samson Resources Company</div>
<div class="t" style="left:440.40px;top:349.20px;line-height:12px;font-size:6.52px;color:#1c6a1c;text-shadow:0.15px 0 0 #1c6a1c">Sutton #1-17</div>
<div class="t" style="left:544.65px;width:200px;text-align:center;top:349.20px;line-height:12px;font-size:6.6px;color:#1c6a1c;text-shadow:0.15px 0 0 #1c6a1c">009-099279-0-0000</div>
<div class="t" style="left:560.30px;width:200px;text-align:right;top:349.20px;line-height:12px;font-size:6.6px;color:#1c6a1c;">01</div>
<div class="t" style="left:706.30px;width:200px;text-align:center;top:349.20px;line-height:12px;font-size:6.0px;color:#333;">-</div>
<div class="a" style="left:346.10px;top:360.00px;width:471.80px;height:1.00px;background:#383838;"></div>
<div class="a" style="left:346.10px;top:361.00px;width:471.80px;height:1.00px;background:#7a7a7a;"></div>
<div class="a" style="left:346.10px;top:363.00px;width:82.50px;height:6.00px;background:#a6eba6;"></div>
<div class="a" style="left:428.60px;top:363.00px;width:10.00px;height:6.00px;background:#86cc86;"></div>
<div class="a" style="left:438.60px;top:363.00px;width:103.80px;height:6.00px;background:#a6eba6;"></div>
<div class="a" style="left:542.40px;top:363.00px;width:10.20px;height:6.00px;background:#86cc86;"></div>
<div class="a" style="left:552.60px;top:363.00px;width:184.10px;height:6.00px;background:#a6eba6;"></div>
<div class="a" style="left:736.70px;top:363.00px;width:9.70px;height:6.00px;background:#86cc86;"></div>
<div class="a" style="left:746.40px;top:362.30px;width:19.80px;height:7.40px;background:#fff;"></div>
<div class="a" style="left:746.40px;top:363.00px;width:13.90px;height:6.00px;background:#a6eba6;"></div>
<div class="a" style="left:766.20px;top:362.30px;width:10.30px;height:7.40px;background:#d8d8d8;"></div>
<div class="a" style="left:776.50px;top:362.30px;width:41.40px;height:7.40px;background:#fff;"></div>
<div class="t" style="left:347.20px;top:359.54px;line-height:12px;font-size:6.5px;color:#1c6a1c;transform:scaleX(0.92);transform-origin:0 0;text-shadow:0.15px 0 0 #1c6a1c">Samson Resources Company</div>
<div class="t" style="left:440.40px;top:359.54px;line-height:12px;font-size:6.52px;color:#1c6a1c;text-shadow:0.15px 0 0 #1c6a1c">Jack #4-14</div>
<div class="t" style="left:544.65px;width:200px;text-align:center;top:359.54px;line-height:12px;font-size:6.6px;color:#1c6a1c;text-shadow:0.15px 0 0 #1c6a1c">009-099923-0-0000</div>
<div class="t" style="left:560.30px;width:200px;text-align:right;top:359.54px;line-height:12px;font-size:6.6px;color:#1c6a1c;">01</div>
<div class="t" style="left:706.30px;width:200px;text-align:center;top:359.54px;line-height:12px;font-size:6.0px;color:#333;">-</div>
<div class="a" style="left:346.10px;top:370.00px;width:471.80px;height:1.00px;background:#383838;"></div>
<div class="a" style="left:346.10px;top:371.00px;width:471.80px;height:1.00px;background:#7a7a7a;"></div>
<div class="a" style="left:346.10px;top:373.00px;width:82.50px;height:6.00px;background:#a6eba6;"></div>
<div class="a" style="left:428.60px;top:373.00px;width:10.00px;height:6.00px;background:#86cc86;"></div>
<div class="a" style="left:438.60px;top:373.00px;width:103.80px;height:6.00px;background:#a6eba6;"></div>
<div class="a" style="left:542.40px;top:373.00px;width:10.20px;height:6.00px;background:#86cc86;"></div>
<div class="a" style="left:552.60px;top:373.00px;width:184.10px;height:6.00px;background:#a6eba6;"></div>
<div class="a" style="left:736.70px;top:373.00px;width:9.70px;height:6.00px;background:#86cc86;"></div>
<div class="a" style="left:746.40px;top:372.30px;width:19.80px;height:7.40px;background:#fff;"></div>
<div class="a" style="left:746.40px;top:373.00px;width:13.90px;height:6.00px;background:#a6eba6;"></div>
<div class="a" style="left:766.20px;top:372.30px;width:10.30px;height:7.40px;background:#d8d8d8;"></div>
<div class="a" style="left:776.50px;top:372.30px;width:41.40px;height:7.40px;background:#fff;"></div>
<div class="t" style="left:347.20px;top:369.88px;line-height:12px;font-size:6.5px;color:#1c6a1c;transform:scaleX(0.92);transform-origin:0 0;text-shadow:0.15px 0 0 #1c6a1c">Samson Resources Company</div>
<div class="t" style="left:440.40px;top:369.88px;line-height:12px;font-size:6.52px;color:#1c6a1c;text-shadow:0.15px 0 0 #1c6a1c">Luthy #4-15</div>
<div class="t" style="left:544.65px;width:200px;text-align:center;top:369.88px;line-height:12px;font-size:6.6px;color:#1c6a1c;text-shadow:0.15px 0 0 #1c6a1c">009-099924-0-0000</div>
<div class="t" style="left:560.30px;width:200px;text-align:right;top:369.88px;line-height:12px;font-size:6.6px;color:#1c6a1c;">01</div>
<div class="t" style="left:706.30px;width:200px;text-align:center;top:369.88px;line-height:12px;font-size:6.0px;color:#333;">-</div>
<div class="a" style="left:346.10px;top:380.00px;width:471.80px;height:1.00px;background:#383838;"></div>
<div class="a" style="left:346.10px;top:381.00px;width:471.80px;height:1.00px;background:#7a7a7a;"></div>
<div class="a" style="left:346.10px;top:383.00px;width:82.50px;height:7.00px;background:#a6eba6;"></div>
<div class="a" style="left:428.60px;top:383.00px;width:10.00px;height:7.00px;background:#86cc86;"></div>
<div class="a" style="left:438.60px;top:383.00px;width:103.80px;height:7.00px;background:#a6eba6;"></div>
<div class="a" style="left:542.40px;top:383.00px;width:10.20px;height:7.00px;background:#86cc86;"></div>
<div class="a" style="left:552.60px;top:383.00px;width:184.10px;height:7.00px;background:#a6eba6;"></div>
<div class="a" style="left:736.70px;top:383.00px;width:9.70px;height:7.00px;background:#86cc86;"></div>
<div class="a" style="left:746.40px;top:382.30px;width:19.80px;height:8.40px;background:#fff;"></div>
<div class="a" style="left:746.40px;top:383.00px;width:13.90px;height:7.00px;background:#a6eba6;"></div>
<div class="a" style="left:766.20px;top:382.30px;width:10.30px;height:8.40px;background:#d8d8d8;"></div>
<div class="a" style="left:776.50px;top:382.30px;width:41.40px;height:8.40px;background:#fff;"></div>
<div class="t" style="left:706.30px;width:200px;text-align:center;top:380.22px;line-height:12px;font-size:6.0px;color:#333;">-</div>
<div class="a" style="left:345.45px;top:187.00px;width:1.30px;height:196.00px;background:#2b2b2b;"></div>
<div class="a" style="left:427.95px;top:187.00px;width:1.30px;height:196.00px;background:#2b2b2b;"></div>
<div class="a" style="left:437.95px;top:187.00px;width:1.30px;height:196.00px;background:#2b2b2b;"></div>
<div class="a" style="left:541.75px;top:187.00px;width:1.30px;height:196.00px;background:#2b2b2b;"></div>
<div class="a" style="left:551.95px;top:187.00px;width:1.30px;height:196.00px;background:#2b2b2b;"></div>
<div class="a" style="left:736.05px;top:187.00px;width:1.30px;height:196.00px;background:#2b2b2b;"></div>
<div class="a" style="left:745.75px;top:187.00px;width:1.30px;height:196.00px;background:#2b2b2b;"></div>
<div class="a" style="left:765.55px;top:187.00px;width:1.30px;height:196.00px;background:#2b2b2b;"></div>
<div class="a" style="left:775.85px;top:187.00px;width:1.30px;height:196.00px;background:#2b2b2b;"></div>
<div class="a" style="left:817.25px;top:187.00px;width:1.30px;height:196.00px;background:#2b2b2b;"></div>

<!--/DOC--></div><div class="a" style="left:0;top:0;width:1px;height:328px;background:#9a9a9a"></div></div>
  <div class="a" style="left:845px;top:54px;width:5px;height:266px;background:#1d4a4e"></div>
  <div class="a" style="left:850px;top:28px;width:5px;height:477px;background:#222"></div>
  <!-- results -->
  <div class="a" style="left:319px;top:387px;width:531px;height:23px;background:#262626"></div>
  <div class="a" style="left:319px;top:410px;width:531px;height:95.5px;background:#252525"></div>

  <!-- logo -->
  <svg class="a" style="left:8px;top:4px" width="22" height="24" viewBox="0 0 22 24">
    <defs><linearGradient id="gg" x1="0" y1="0" x2="0" y2="1"><stop offset="0" stop-color="#eca024"/><stop offset="0.55" stop-color="#dc5a1e"/><stop offset="1" stop-color="#c42418"/></linearGradient></defs>
    <text x="10.7" y="15.8" text-anchor="middle" font-family="Liberation Serif" font-size="18" fill="url(#gg)">G</text>
    <ellipse cx="7.3" cy="17.7" rx="2.3" ry="1.3" fill="#12897f"/>
    <ellipse cx="14" cy="17.7" rx="2.3" ry="1.3" fill="#12897f"/>
    <ellipse cx="10.6" cy="20.1" rx="2.3" ry="1.3" fill="#12897f"/>
  </svg>
  <div class="a" style="left:35px;top:7px;width:1px;height:22px;background:#222"></div>
  <div class="t" style="left:55px;top:2.5px;line-height:20px;font-size:11px;font-weight:bold;color:#d2d2d2">Row Extractor</div>
  <div class="a" style="left:136px;top:8px;width:1px;height:11px;background:#555"></div>
  <div class="t" style="left:144px;top:3px;line-height:20px;font-size:9.4px;font-style:italic;color:#c8c8c8;letter-spacing:-0.2px;text-shadow:0.3px 0 0 #c8c8c8">Pattern Match</div>
  <!-- OK / CANCEL -->
  <div class="a" style="left:763px;top:3px;width:30px;height:19px;border:1.5px solid #1c8c98;border-radius:3px"></div>
  <div class="t" style="left:763px;top:3px;width:30px;line-height:19px;text-align:center;font-size:6.6px;font-weight:bold;color:#22b4c4">OK</div>
  <div class="a" style="left:797px;top:3px;width:49px;height:19px;border:1.5px solid #8a1e36;border-radius:3px"></div>
  <div class="t" style="left:797px;top:3px;width:49px;line-height:19px;text-align:center;font-size:6.6px;font-weight:bold;color:#d0223e">CANCEL</div>
  <!-- user / help -->
  <svg class="a" style="left:852px;top:6px" width="20" height="20" viewBox="0 0 20 20">
    <defs><clipPath id="uc"><circle cx="10" cy="10.4" r="6.3"/></clipPath></defs>
    <circle cx="10" cy="10.4" r="6.6" fill="none" stroke="#7a7a7a" stroke-width="1.5"/>
    <g clip-path="url(#uc)" fill="#7a7a7a"><circle cx="10" cy="8.2" r="2.6"/><ellipse cx="10" cy="16.6" rx="5.5" ry="4"/></g>
  </svg>
  <svg class="a" style="left:872px;top:6px" width="20" height="20" viewBox="0 0 20 20">
    <circle cx="9.9" cy="10.3" r="7.5" fill="#7a7a7a"/>
    <text x="9.9" y="14" text-anchor="middle" font-family="Liberation Sans" font-weight="bold" font-size="10.5" fill="#151515">?</text>
  </svg>

  <!-- sidebar tree -->
  <div class="a" style="left:14px;top:45.5px;width:0;height:0;border-left:2.2px solid transparent;border-right:2.2px solid transparent;border-top:4px solid #606060"></div>
  <svg class="a" style="left:23px;top:43px" width="10" height="10" viewBox="0 0 10 10"><ellipse cx="4.5" cy="2" rx="4" ry="1.6" fill="#aab"/><rect x="0.5" y="2" width="8" height="6" fill="#99a"/><ellipse cx="4.5" cy="8" rx="4" ry="1.6" fill="#99a"/><circle cx="6.8" cy="6.8" r="2.8" fill="#2a7ac0"/></svg>
  <div class="t" style="left:37px;top:37.5px;line-height:20px;font-size:9px;color:#5a5a5a">OI</div>
  <div class="a" style="left:23.5px;top:59px;border-top:2.2px solid transparent;border-bottom:2.2px solid transparent;border-left:4px solid #606060"></div>
  <svg class="a" style="left:32.6px;top:57.3px" width="9.5" height="7" viewBox="0 0 10 7"><path d="M0.3 1 Q0.3 0.3 1 0.3 H3.8 L4.6 1.2 H9 Q9.7 1.2 9.7 1.9 V6.3 Q9.7 6.8 9.1 6.8 H0.9 Q0.3 6.8 0.3 6.2 Z" fill="#9c8048"/><path d="M0.3 2.6 H9.7 V6.3 Q9.7 6.8 9.1 6.8 H0.9 Q0.3 6.8 0.3 6.2 Z" fill="#c4a862"/></svg>
  <div class="a" style="left:23px;top:72px;border-left:2.2px solid transparent;border-right:2.2px solid transparent;border-top:4px solid #606060"></div>
  <svg class="a" style="left:32.6px;top:70.2px" width="9.5" height="7" viewBox="0 0 10 7"><path d="M0.3 1 Q0.3 0.3 1 0.3 H3.8 L4.6 1.2 H9 Q9.7 1.2 9.7 1.9 V6.3 Q9.7 6.8 9.1 6.8 H0.9 Q0.3 6.8 0.3 6.2 Z" fill="#9c8048"/><path d="M0.3 2.6 H9.7 V6.3 Q9.7 6.8 9.1 6.8 H0.9 Q0.3 6.8 0.3 6.2 Z" fill="#c4a862"/></svg>
  <div class="a" style="left:32.5px;top:85px;border-top:2.2px solid transparent;border-bottom:2.2px solid transparent;border-left:4px solid #606060"></div>
  <div class="a" style="left:42.2px;top:83.6px;width:2.8px;height:8px;overflow:hidden"><svg class="a" style="left:0;top:0" width="9.5" height="7" viewBox="0 0 10 7"><path d="M0.3 1 Q0.3 0.3 1 0.3 H3.8 L4.6 1.2 H9 Q9.7 1.2 9.7 1.9 V6.3 Q9.7 6.8 9.1 6.8 H0.9 Q0.3 6.8 0.3 6.2 Z" fill="#9c8048"/><path d="M0.3 2.6 H9.7 V6.3 Q9.7 6.8 9.1 6.8 H0.9 Q0.3 6.8 0.3 6.2 Z" fill="#c4a862"/></svg></div>
  <div class="a" style="left:32px;top:97.5px;border-left:2.2px solid transparent;border-right:2.2px solid transparent;border-top:4px solid #606060"></div>
  <div class="a" style="left:42.2px;top:96px;width:2.8px;height:8px;overflow:hidden"><svg class="a" style="left:0;top:0" width="9.5" height="7" viewBox="0 0 10 7"><path d="M0.3 1 Q0.3 0.3 1 0.3 H3.8 L4.6 1.2 H9 Q9.7 1.2 9.7 1.9 V6.3 Q9.7 6.8 9.1 6.8 H0.9 Q0.3 6.8 0.3 6.2 Z" fill="#9c8048"/><path d="M0.3 2.6 H9.7 V6.3 Q9.7 6.8 9.1 6.8 H0.9 Q0.3 6.8 0.3 6.2 Z" fill="#c4a862"/></svg></div>
  <div class="a" style="left:41.5px;top:110px;border-left:2.2px solid transparent;border-right:2.2px solid transparent;border-top:4px solid #606060"></div>
  <svg class="a" style="left:32.4px;top:251.7px" width="9.6" height="7.4" viewBox="0 0 10 7"><path d="M0.3 1 Q0.3 0.3 1 0.3 H3.8 L4.6 1.2 H9 Q9.7 1.2 9.7 1.9 V6.3 Q9.7 6.8 9.1 6.8 H0.9 Q0.3 6.8 0.3 6.2 Z" fill="#9c8048"/><path d="M0.3 2.6 H9.7 V6.3 Q9.7 6.8 9.1 6.8 H0.9 Q0.3 6.8 0.3 6.2 Z" fill="#c4a862"/></svg>
  <svg class="a" style="left:32.4px;top:264.4px" width="9.6" height="7.4" viewBox="0 0 10 7"><path d="M0.3 1 Q0.3 0.3 1 0.3 H3.8 L4.6 1.2 H9 Q9.7 1.2 9.7 1.9 V6.3 Q9.7 6.8 9.1 6.8 H0.9 Q0.3 6.8 0.3 6.2 Z" fill="#9c8048"/><path d="M0.3 2.6 H9.7 V6.3 Q9.7 6.8 9.1 6.8 H0.9 Q0.3 6.8 0.3 6.2 Z" fill="#c4a862"/></svg>
  <div class="a" style="left:23px;top:278.3px;border-top:2.6px solid transparent;border-bottom:2.6px solid transparent;border-left:4.4px solid #6a6a6a"></div>
  <svg class="a" style="left:32.4px;top:277.3px" width="9.6" height="7.4" viewBox="0 0 10 7"><path d="M0.3 1 Q0.3 0.3 1 0.3 H3.8 L4.6 1.2 H9 Q9.7 1.2 9.7 1.9 V6.3 Q9.7 6.8 9.1 6.8 H0.9 Q0.3 6.8 0.3 6.2 Z" fill="#9c8048"/><path d="M0.3 2.6 H9.7 V6.3 Q9.7 6.8 9.1 6.8 H0.9 Q0.3 6.8 0.3 6.2 Z" fill="#c4a862"/></svg>
  <div class="a" style="left:23px;top:291.2px;border-top:2.6px solid transparent;border-bottom:2.6px solid transparent;border-left:4.4px solid #6a6a6a"></div>
  <svg class="a" style="left:32.4px;top:290.1px" width="9.6" height="7.4" viewBox="0 0 10 7"><path d="M0.3 1 Q0.3 0.3 1 0.3 H3.8 L4.6 1.2 H9 Q9.7 1.2 9.7 1.9 V6.3 Q9.7 6.8 9.1 6.8 H0.9 Q0.3 6.8 0.3 6.2 Z" fill="#9c8048"/><path d="M0.3 2.6 H9.7 V6.3 Q9.7 6.8 9.1 6.8 H0.9 Q0.3 6.8 0.3 6.2 Z" fill="#c4a862"/></svg>

  <!-- tabs -->
  <div class="a" style="left:50.5px;top:34.5px;width:67.5px;height:16px;background:#2b2b2b;border-radius:3px"></div>
  <div class="t" style="left:60px;top:32.5px;line-height:20px;font-size:8.1px;font-weight:bold;color:#cfcfcf">Expressions</div>
  <div class="a" style="left:122.5px;top:34.5px;width:62.5px;height:16px;background:#242424;border-radius:3px"></div>
  <div class="t" style="left:132.4px;top:32.5px;line-height:20px;font-size:8.5px;font-weight:bold;color:#5e5e5e">Properties</div>
  <div class="a" style="left:276px;top:38.3px;width:13.4px;height:7.8px;background:#c4c4c4;border-radius:4px"></div>
  <div class="a" style="left:283.9px;top:40.4px;width:3.6px;height:3.6px;background:#111;border-radius:50%"></div>
  <div class="a" style="left:294px;top:36.8px;width:11px;height:11px;background:#10a0a8;border-radius:1.5px"></div>
  <div class="a" style="left:296.6px;top:41px;width:1.7px;height:4.6px;background:#0a3c40"></div>
  <div class="a" style="left:299.4px;top:39.2px;width:1.7px;height:6.4px;background:#0a3c40"></div>
  <div class="a" style="left:302.2px;top:43.3px;width:1.7px;height:2.3px;background:#0a3c40"></div>

  <div class="t" style="left:59.6px;top:52px;line-height:20px;font-size:8px;font-weight:bold;color:#a6a6a6">VALUE PATTERN</div>
  <div class="a" style="left:59px;top:67.5px;width:247.5px;height:80px;background:#202020;border:1px solid #272727;border-radius:4px"></div>
  <div class="t mono" style="left:66.2px;top:71.20px;font-size:8.125px;line-height:12px;color:#c0c0c0;text-shadow:0.4px 0 0 currentColor"><span style="color:#bdbdbd">(</span><span style="color:#aa46b0">?&lt;Operator_Name&gt;</span><span style="color:#c9c21c">[^\t]</span><span style="color:#2fb3b3">+</span>)<span style="color:#c9c21c">\t</span> <span class="rn">\r\n</span></div>
<div class="t mono" style="left:66.2px;top:80.53px;font-size:8.125px;line-height:12px;color:#c0c0c0;text-shadow:0.4px 0 0 currentColor">(<span style="color:#aa46b0">?&lt;Well_Name&gt;</span><span style="color:#c9c21c">[^\t]</span><span style="color:#2fb3b3">+</span>)<span style="color:#c9c21c">\t</span> <span class="rn">\r\n</span></div>
<div class="t mono" style="left:66.2px;top:89.86px;font-size:8.125px;line-height:12px;color:#c0c0c0;text-shadow:0.4px 0 0 currentColor">(<span style="color:#aa46b0">?&lt;Lease_Number&gt;</span>\d<span style="color:#2fb3b3">{3}</span>-\d<span style="color:#2fb3b3">{6}</span>-\d-\d<span style="color:#2fb3b3">{4}</span>)<span style="color:#c9c21c">\t</span> <span class="rn">\r\n</span></div>
<div class="t mono" style="left:66.2px;top:99.19px;font-size:8.125px;line-height:12px;color:#c0c0c0;text-shadow:0.4px 0 0 currentColor">(<span style="color:#aa46b0">?&lt;PC&gt;</span>\d<span style="color:#2fb3b3">{2}</span>)(<span style="color:#c9c21c">[\t\r\f]</span>|$) <span class="rn">\r\n</span></div>
<div class="t mono" style="left:66.2px;top:108.52px;font-size:8.125px;line-height:12px;color:#c0c0c0;text-shadow:0.4px 0 0 currentColor">(<span style="color:#aa46b0">?&lt;Runs&gt;</span>(\d<span style="color:#2fb3b3">{1,3}</span>(,\d<span style="color:#2fb3b3">{3}</span>)<span style="color:#2fb3b3">?</span><span style="color:#c9c21c">[.]</span>\d<span style="color:#2fb3b3">{2}</span>))<span style="color:#2fb3b3">?</span></div>

  <div class="t" style="left:59.6px;top:149.4px;line-height:20px;font-size:8.2px;font-weight:bold;color:#a6a6a6">PREFIX PATTERN</div>
  <div class="a" style="left:59px;top:165px;width:247.5px;height:19px;background:#202020;border:1px solid #272727;border-radius:4px"></div>
  <div class="t mono" style="left:64.6px;top:164.7px;line-height:20px;font-size:8px;color:#c0c0c0"><span style="color:#c8c020">\n</span>|^</div>
  <div class="t" style="left:59.6px;top:185.4px;line-height:20px;font-size:8.2px;font-weight:bold;color:#a6a6a6">SUFFIX PATTERN</div>
  <div class="a" style="left:59px;top:200.6px;width:247.5px;height:20px;background:#202020;border:1px solid #272727;border-radius:4px"></div>
  <div class="t" style="left:59.6px;top:221px;line-height:20px;font-size:8.2px;font-weight:bold;color:#a6a6a6">OUTPUT FORMAT</div>
  <div class="a" style="left:59px;top:236.3px;width:247.5px;height:19.7px;background:#202020;border:1px solid #272727;border-radius:4px"></div>
  <div class="a" style="left:59px;top:265px;width:247.5px;height:1px;background:#2f2f2f"></div>
  <div class="t" style="left:59.7px;top:267.4px;line-height:20px;font-size:8.4px;color:#27aebe">OK: Syntax is valid.</div>

  <!-- test batch -->
  <div class="t" style="left:60px;top:292.5px;line-height:20px;font-size:7.8px;color:#8e8e8e">TEST BATCH</div>
  <svg class="a" style="left:292px;top:296px" width="15" height="12" viewBox="0 0 15 12">
    <rect x="1.3" y="1" width="3.8" height="4" fill="#ddd"/><rect x="9.2" y="1" width="4.2" height="4" fill="#ddd"/><rect x="9.2" y="7" width="4.2" height="4" fill="#ddd"/>
    <path d="M5 3 H9.2 M7 3 V9 H9.2" stroke="#ddd" stroke-width="0.9" fill="none"/>
  </svg>
  <div class="a" style="left:50px;top:313px;width:266px;height:1px;background:#2e2e2e"></div>
  <div class="a" style="left:53px;top:333.3px;border-left:3px solid transparent;border-right:3px solid transparent;border-top:5px solid #8a8a8a"></div>
  <svg class="a" style="left:66px;top:322px" width="34" height="28" viewBox="0 0 34 28">
    <path d="M2.1 3.5 Q2.1 2.1 3.5 2.1 H13.2 L16.6 5.6 H30.5 Q31.9 5.6 31.9 7 V24.6 Q31.9 26 30.5 26 H3.5 Q2.1 26 2.1 24.6 Z" fill="none" stroke="#f2f2f2" stroke-width="2.3" stroke-linejoin="round"/>
  </svg>
  <div class="t" style="left:104px;top:325.6px;line-height:20px;font-size:8.5px;color:#b8b8b8">Row Match Table Examples</div>

  <div class="a" style="left:90px;top:376px;border-top:3px solid transparent;border-bottom:3px solid transparent;border-left:5px solid #8a8a8a"></div>
  <svg class="a" style="left:105px;top:360px" width="31" height="40" viewBox="0 0 31 40">
    <path d="M3.5 1.2 H19.5 L28.8 10.5 V35.8 Q28.8 38.2 26.4 38.2 H3.5 Q1.2 38.2 1.2 35.8 V3.6 Q1.2 1.2 3.5 1.2 Z" fill="none" stroke="#f2f2f2" stroke-width="2.3" stroke-linejoin="round"/>
    <path d="M19.5 1.2 V10.5 H28.8 Z" fill="#f2f2f2"/>
    <path d="M7.5 17.5 H22 M7.5 22 H22 M7.5 26.5 H14" stroke="#f2f2f2" stroke-width="2.2"/>
  </svg>
  <div class="t" style="left:141.3px;top:368.8px;line-height:20px;font-size:8.5px;color:#b8b8b8">Sales Report (1)</div>

  <div class="a" style="left:98.7px;top:401.5px;width:212.8px;height:43.2px;background:#2d2d2d;border:1px solid #4a4a4a;border-radius:3px"></div>
  <div class="a" style="left:90px;top:419.5px;border-top:3px solid transparent;border-bottom:3px solid transparent;border-left:5px solid #8a8a8a"></div>
  <svg class="a" style="left:105px;top:404px" width="31" height="40" viewBox="0 0 31 40">
    <path d="M3.5 1.2 H19.5 L28.8 10.5 V35.8 Q28.8 37.2 26.4 37.2 H3.5 Q1.2 37.2 1.2 35.8 V3.6 Q1.2 1.2 3.5 1.2 Z" fill="none" stroke="#f2f2f2" stroke-width="2.3" stroke-linejoin="round"/>
    <path d="M19.5 1.2 V10.5 H28.8 Z" fill="#f2f2f2"/>
    <path d="M7.5 17 H22 M7.5 21.5 H22 M7.5 26 H14" stroke="#f2f2f2" stroke-width="2.2"/>
  </svg>
  <div class="t" style="left:141.3px;top:412.5px;line-height:20px;font-size:8.5px;color:#e8e8e8;text-shadow:0.35px 0 0 #e8e8e8">Production Reports (2)</div>

  <!-- doc toolbar icons -->
  <svg class="a" style="left:328px;top:36px" width="15" height="12" viewBox="0 0 15 12">
    <rect x="1" y="1" width="1.6" height="10" fill="#b8b8b8"/><rect x="12.4" y="1" width="1.6" height="10" fill="#b8b8b8"/>
    <path d="M4 6 L6.2 3.8 V8.2 Z M11 6 L8.8 3.8 V8.2 Z" fill="#b8b8b8"/><rect x="5.5" y="5.3" width="4" height="1.4" fill="#b8b8b8"/>
  </svg>
  <svg class="a" style="left:346px;top:35.8px" width="13" height="12" viewBox="0 0 13 12">
    <rect x="1.2" y="1" width="10.6" height="10" fill="none" stroke="#9a9a9a" stroke-width="1.1" stroke-dasharray="1.2 0.9"/>
    <rect x="3.7" y="3.4" width="5.6" height="5.2" fill="#d0d0d0"/><rect x="5.1" y="4.7" width="2.8" height="2.6" fill="#151515"/>
  </svg>
  <svg class="a" style="left:363px;top:35px" width="13" height="14" viewBox="0 0 13 14">
    <path d="M1.2 3.5 V12.2 Q1.2 13 2 13 H8.5" fill="none" stroke="#b0b0b0" stroke-width="1.2"/>
    <rect x="3.2" y="1" width="8.3" height="10.5" rx="1.2" fill="#c4c4c4"/>
  </svg>
  <svg class="a" style="left:380px;top:36px" width="13" height="12" viewBox="0 0 13 12">
    <rect x="0.8" y="0.7" width="11.3" height="10.3" rx="1.3" fill="#c4c4c4"/>
    <path d="M3 8.2 L4.7 6.2 L5.9 7.4 L7.4 5.5 L9.8 8.2 Z" fill="#222"/>
  </svg>
  <svg class="a" style="left:533px;top:37px" width="11" height="10" viewBox="0 0 11 10">
    <rect x="1" y="1.5" width="1.6" height="7.5" fill="#5e5e5e"/><path d="M9.3 1.5 V9 L3.2 5.25 Z" fill="#5e5e5e"/>
  </svg>
  <svg class="a" style="left:551px;top:37px" width="8" height="10" viewBox="0 0 8 10">
    <path d="M5.8 1.8 L2.6 5.2 L5.8 8.6" fill="none" stroke="#5e5e5e" stroke-width="1.4"/>
  </svg>
  <div class="a" style="left:572.3px;top:34px;width:15.7px;height:14px;border:1px solid #3c3c3c;border-radius:3px"></div>
  <div class="t" style="left:572.3px;top:32.3px;width:15.7px;text-align:center;line-height:20px;font-size:9px;color:#b4b4b4">1</div>
  <div class="t" style="left:589.6px;top:32.3px;line-height:20px;font-size:9.6px;letter-spacing:1.3px;color:#b4b4b4">/5</div>
  <svg class="a" style="left:609px;top:37px" width="8" height="10" viewBox="0 0 8 10">
    <path d="M2.6 1.8 L5.8 5.2 L2.6 8.6" fill="none" stroke="#c4c4c4" stroke-width="1.5"/>
  </svg>
  <svg class="a" style="left:625px;top:37px" width="12" height="10" viewBox="0 0 12 10">
    <path d="M1.5 1.5 V9 L8 5.25 Z" fill="#c4c4c4"/><rect x="8.6" y="1.5" width="1.7" height="7.5" fill="#c4c4c4"/>
  </svg>
  <svg class="a" style="left:782px;top:35px" width="14" height="13" viewBox="0 0 14 13">
    <rect x="3.3" y="1" width="7.4" height="3" fill="#c8c8c8"/>
    <rect x="0.6" y="4" width="12.8" height="5.6" rx="1.5" fill="#c8c8c8"/>
    <rect x="3.3" y="7.5" width="7.4" height="4.6" fill="#c8c8c8" stroke="#1b1b1b" stroke-width="0.9"/>
    <circle cx="11.2" cy="5.8" r="0.6" fill="#333"/>
  </svg>
  <svg class="a" style="left:799px;top:35.5px" width="14" height="13" viewBox="0 0 14 13">
    <circle cx="6.6" cy="6.4" r="6.2" fill="#c0c0c0"/>
    <rect x="6" y="5.4" width="1.2" height="4.4" fill="#444"/><circle cx="6.6" cy="3.7" r="0.75" fill="#444"/>
  </svg>
  <div class="a" style="left:817.5px;top:37px;width:1px;height:10px;background:#4a4a4a"></div>
  <div class="a" style="left:823.4px;top:35.3px;width:17px;height:11px;background:#222;border-radius:3px"></div>
  <svg class="a" style="left:823px;top:36.3px" width="18" height="13" viewBox="0 0 18 13">
    <rect x="1.5" y="1.3" width="4.2" height="3.6" fill="#e8c050"/><rect x="1.5" y="0.6" width="2" height="1.2" fill="#e8c050"/>
    <rect x="6.8" y="2.6" width="2.6" height="3" fill="#f0f0f0"/><rect x="6.8" y="7.3" width="2.6" height="3.2" fill="#f0f0f0"/>
    <path d="M3.5 5 V8.9 H6.8" stroke="#777" stroke-width="0.6" fill="none"/>
    <path d="M11.6 3.5 H16 L13.8 7.4 Z" fill="#8a8a8a"/>
  </svg>

  <!-- results -->
  <div class="t" style="left:329px;top:388px;line-height:20px;font-size:8.45px;color:#9a9a9a">133 results in 39 ms.</div>
  <div class="a" style="left:319px;top:410px;width:531px;height:1px;background:#1f1f1f"></div>
  <div class="t" style="left:326.7px;top:414.7px;line-height:20px;font-size:8.3px;font-weight:bold;color:#b4b4b4">Value</div>
  <div class="t" style="left:503px;top:414.7px;line-height:20px;font-size:8.3px;font-weight:bold;color:#b4b4b4">Page No</div>
  <div class="t" style="left:560.8px;top:414.7px;line-height:20px;font-size:8.3px;font-weight:bold;color:#b4b4b4">Span</div>
  <div class="t" style="left:678.3px;top:414.3px;line-height:20px;font-size:8.3px;font-weight:bold;color:#b4b4b4">Confidence</div>
  <div class="t" style="left:736.7px;top:414.3px;line-height:20px;font-size:8.3px;font-weight:bold;color:#b4b4b4">Source</div>
  <div class="a" style="left:319px;top:433px;width:531px;height:61.8px;overflow:hidden">
    <div class="a" style="left:4.9px;top:1.6px;width:516.5px;height:16.8px;background:#2e2e2e;border:1.2px solid #666;border-right:none;border-radius:3px 0 0 3px"></div>
    <div class="a" style="left:4.9px;top:19.3px;width:516.5px;height:16.4px;background:#2b2b2b;border:1.2px solid #505050;border-right:none;border-radius:3px 0 0 3px"></div>
    <div class="a" style="left:4.9px;top:35.6px;width:516.5px;height:16.4px;background:#2b2b2b;border:1.2px solid #505050;border-right:none;border-radius:3px 0 0 3px"></div>
    <div class="a" style="left:4.9px;top:51.8px;width:516.5px;height:16.4px;background:#2b2b2b;border:1.2px solid #505050;border-right:none;border-radius:3px 0 0 3px"></div>
  </div>
  <div class="a" style="left:319px;top:433px;width:531px;height:61.5px;overflow:hidden">
    <div class="t" style="left:7.7px;top:-0.4px;line-height:20px;font-size:8.45px;color:#e2e2e2">Samson Resources Company\tMusic #3-24...</div>
    <div class="t" style="left:184px;top:-0.4px;line-height:20px;font-size:8.45px;color:#e2e2e2">1</div>
    <div class="t" style="left:241.8px;top:-0.4px;line-height:20px;font-size:8.45px;color:#e2e2e2">873-930 (58)</div>
    <div class="t" style="left:359.3px;top:-0.4px;line-height:20px;font-size:8.45px;color:#e2e2e2">100%</div>
    <div class="t" style="left:7.7px;top:17px;line-height:20px;font-size:8.45px;color:#e2e2e2">Samson Resources Company\tWalters #4-...</div>
    <div class="t" style="left:184px;top:17px;line-height:20px;font-size:8.45px;color:#e2e2e2">1</div>
    <div class="t" style="left:241.8px;top:17px;line-height:20px;font-size:8.45px;color:#e2e2e2">932-991 (60)</div>
    <div class="t" style="left:359.3px;top:17px;line-height:20px;font-size:8.45px;color:#e2e2e2">100%</div>
    <div class="t" style="left:7.7px;top:33.5px;line-height:20px;font-size:8.45px;color:#e2e2e2">Samson Resources Company\tThornton #...</div>
    <div class="t" style="left:184px;top:33.5px;line-height:20px;font-size:8.45px;color:#e2e2e2">1</div>
    <div class="t" style="left:241.8px;top:33.5px;line-height:20px;font-size:8.45px;color:#e2e2e2">995-1055 (61)</div>
    <div class="t" style="left:359.3px;top:33.5px;line-height:20px;font-size:8.45px;color:#e2e2e2">100%</div>
    <div class="t" style="left:7.7px;top:49.7px;line-height:20px;font-size:8.45px;color:#e2e2e2">Samson Resources Company\tSimmons #...</div>
    <div class="t" style="left:184px;top:49.7px;line-height:20px;font-size:8.45px;color:#e2e2e2">1</div>
    <div class="t" style="left:241.8px;top:49.7px;line-height:20px;font-size:8.45px;color:#e2e2e2">1057-1116 (60)</div>
    <div class="t" style="left:359.3px;top:49.7px;line-height:20px;font-size:8.45px;color:#e2e2e2">100%</div>
  </div>
  <div class="a" style="left:324px;top:495px;width:506px;height:4.5px;background:#1d5457;border-radius:2.5px"></div>
  <div class="a" style="left:840.7px;top:435px;width:4.3px;height:7px;background:#1d5457;border-radius:2px"></div>

  <!-- callout -->
  <div class="a" style="left:602.2px;top:381.2px;width:168px;height:33.2px;background:#f7941d;box-shadow:-2px 1px 3px rgba(0,0,0,0.5)"></div>
  <div class="a" style="left:761px;top:388.3px;width:18px;height:18.7px;background:#f7941d;border-radius:9px"></div>
  <div class="a" style="left:776px;top:396.8px;width:38px;height:2.6px;background:#f7941d"></div>
  
  <div class="t" style="left:602px;top:380.6px;width:159.5px;text-align:right;line-height:20px;font-size:10.65px;font-weight:bold;color:#fff;margin-top:-0.7px">Click the flashlight button</div>
  <div class="t" style="left:602px;top:394.4px;width:159.5px;text-align:right;line-height:20px;font-size:10.65px;font-weight:bold;color:#fff;margin-top:-0.5px">to open a tab for the Inspector</div>
  <div class="a" style="left:820.5px;top:384.8px;width:26.5px;height:25.5px;border:1.7px solid #cdca0c;border-radius:2px;background:#1c1c1c"></div>
  <svg class="a" style="left:828px;top:391px" width="11" height="15" viewBox="0 0 11 15">
    <rect x="1.8" y="1.4" width="7.2" height="2.1" fill="#c8c8c8"/>
    <rect x="1.8" y="4.1" width="7.2" height="2.1" fill="#b8b8b8"/>
    <path d="M1.8 6.2 H9 L8 8 V14 H2.8 V8 Z" fill="#c0c0c0"/>
    <circle cx="5.4" cy="9.3" r="0.8" fill="#333"/>
  </svg>
  <svg class="a" style="left:811px;top:392px" width="18" height="12" viewBox="0 0 18 12"><path d="M1.5 1 L16.5 6 L1.5 11 Z" fill="#f7941d"/></svg>
  <!-- right column -->
  <div class="a" style="left:857px;top:51px;width:34px;height:446.8px;background:#141414"></div>
</div>
</body></html>
